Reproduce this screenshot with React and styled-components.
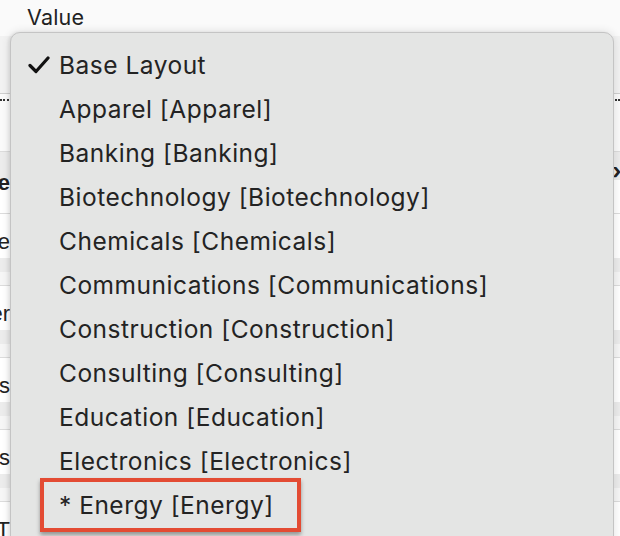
import React from "react";
import styled, { createGlobalStyle } from "styled-components";

const Global = createGlobalStyle`
  html, body { margin: 0; padding: 0; }
  body {
    width: 620px;
    height: 536px;
    overflow: hidden;
    background: #fafafa;
    font-family: Inter, "Noto Sans", "Liberation Sans", sans-serif;
    color: #222;
  }
`;

const Page = styled.div`
  position: relative;
  width: 620px;
  height: 536px;
  overflow: hidden;
  background: #fafafa;
`;

const Label = styled.div`
  padding: 4px 0 0 27px;
  height: 32px;
  box-sizing: border-box;
  font-size: 21.5px;
  line-height: 26px;
  letter-spacing: 0.2px;
  color: #222;
`;

const Table = styled.div`
  display: flex;
  flex-direction: column;
`;

const HeaderBar = styled.div`
  height: 58px;
  background: #f2f2f2;
  border-bottom: 1px solid #cfcfcf;
  box-sizing: border-box;
  margin-top: 4px;
`;

const Dotted = styled.div`
  height: 0;
  border-top: 2px dotted #333;
  margin-top: 5px;
`;

const Spacer = styled.div`
  height: ${(p) => p.h}px;
`;

const Row = styled.div`
  height: ${(p) => (p.head ? 62 : 72)}px;
  padding-bottom: ${(p) => (p.head ? 0 : 16)}px;
  display: grid;
  grid-template-columns: 10px 1fr 8px;
  border-top: 1px solid #dcdcdc;
  box-sizing: border-box;
  background: ${(p) =>
    p.head
      ? "linear-gradient(to bottom, #ececec 0, #ececec 28px, #ffffff 28px)"
      : "linear-gradient(to bottom, #ffffff 0, #ffffff 44px, #ececec 44px, #ececec 58px, #f6f6f6 58px)"};
`;

const EdgeCell = styled.div`
  overflow: hidden;
  display: flex;
  justify-content: flex-end;
  align-items: center;
  white-space: nowrap;
  font-family: "Liberation Sans", Arial, sans-serif;
  font-size: 22px;
  font-weight: ${(p) => (p.bold ? 700 : 400)};
  color: #222;
`;

const RightCell = styled.div`
  overflow: hidden;
  display: flex;
  align-items: center;
  justify-content: flex-start;
  padding-bottom: ${(p) => (p.raise ? 24 : 0)}px;
  font-size: 22px;
  font-weight: 700;
  color: #222;
`;

const Menu = styled.div`
  position: absolute;
  left: 10px;
  top: 32px;
  width: 604px;
  height: 540px;
  box-sizing: border-box;
  background: #e4e5e4;
  border: 1px solid #c4c4c4;
  border-radius: 10px 10px 0 0;
  box-shadow: 0 0 10px rgba(0, 0, 0, 0.12), -2px 0 3px rgba(0, 0, 0, 0.06);
  padding-top: 10px;
  display: flex;
  flex-direction: column;
`;

const Item = styled.div`
  height: 44px;
  display: flex;
  align-items: center;
  padding-left: 17px;
  font-size: 24.5px;
  letter-spacing: 0.5px;
  color: #232323;
  white-space: nowrap;
`;

const Mark = styled.span`
  width: 31px;
  flex: none;
  display: flex;
  align-items: center;
`;

const Highlight = styled.span`
  display: inline-flex;
  align-items: center;
  box-sizing: border-box;
  width: 261px;
  height: 54px;
  margin-left: -19px;
  padding-left: 15px;
  border: 4px solid #e34b33;
  box-shadow: 0 3px 4px rgba(0, 0, 0, 0.35);
`;

const Check = () => (
  <svg width="22" height="18" viewBox="0 0 22 18">
    <path
      d="M2 9.5 L8 15.5 L20 2"
      fill="none"
      stroke="#111"
      strokeWidth="3.2"
      strokeLinecap="round"
      strokeLinejoin="round"
    />
  </svg>
);

const items = [
  "Apparel [Apparel]",
  "Banking [Banking]",
  "Biotechnology [Biotechnology]",
  "Chemicals [Chemicals]",
  "Communications [Communications]",
  "Construction [Construction]",
  "Consulting [Consulting]",
  "Education [Education]",
  "Electronics [Electronics]",
];

const rows = ["Type", "Manager", "Status", "Address", "T"];

export default function App() {
  return (
    <Page>
      <Global />
      <Label>Value</Label>
      <Table>
        <HeaderBar />
        <Dotted />
        <Spacer h={50} />
        <Row head>
          <EdgeCell bold>Name</EdgeCell>
          <div />
          <RightCell raise>›</RightCell>
        </Row>
        {rows.map((r) => (
          <Row key={r}>
            <EdgeCell>{r}</EdgeCell>
            <div />
            <RightCell />
          </Row>
        ))}
      </Table>
      <Menu>
        <Item>
          <Mark>
            <Check />
          </Mark>
          Base Layout
        </Item>
        {items.map((t) => (
          <Item key={t}>
            <Mark />
            {t}
          </Item>
        ))}
        <Item>
          <Mark />
          <Highlight>* Energy [Energy]</Highlight>
        </Item>
      </Menu>
    </Page>
  );
}
